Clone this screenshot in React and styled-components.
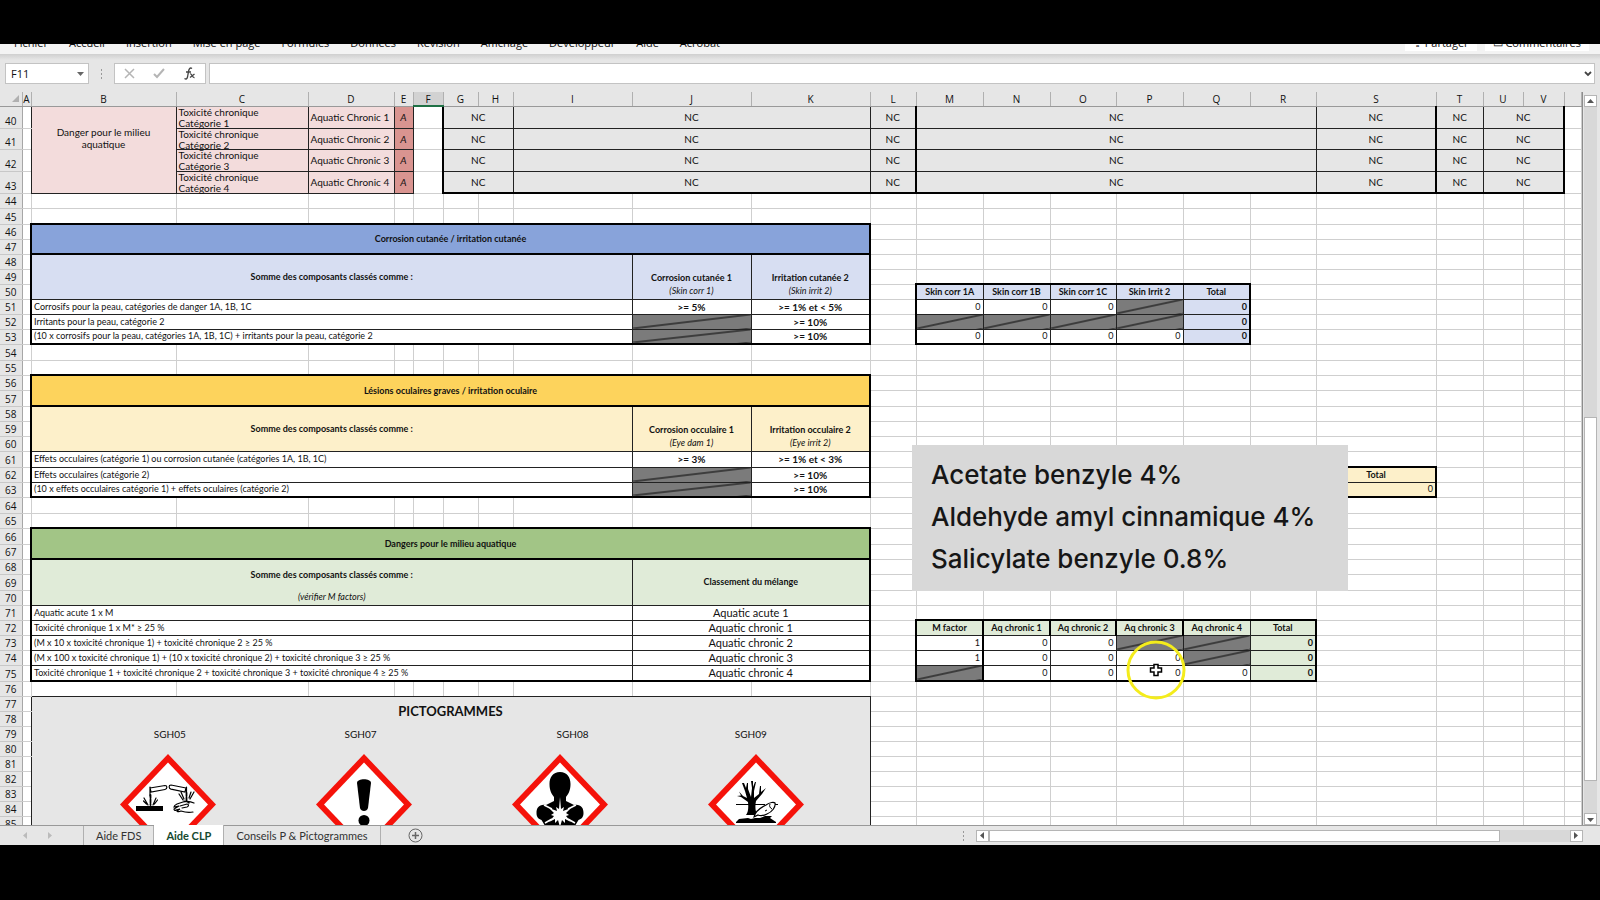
import { useState } from "react";
import styled, { createGlobalStyle, css } from "styled-components";

const GlobalStyle = createGlobalStyle`
  * {
    box-sizing: border-box;
  }
  body {
    margin: 0;
    background-color: #000;
    font-family: Lato, "Liberation Sans", sans-serif;
    font-size: 10px;
    color: #111;
  }
  button, input {
    font-family: inherit;
    color: inherit;
    border: none;
    padding: 0;
  }
`;

const Stage = styled.div`
  position: relative;
  display: flex;
  flex-direction: column;
  height: 100vh;
  padding: 44px 0 55px;
  overflow: hidden;
`;

const Ribbon = styled.nav`
  display: flex;
  align-items: flex-end;
  gap: 21px;
  height: 10px;
  flex-shrink: 0;
  padding: 0 11px 3px 14px;
  background-color: #f3f3f3;
  overflow: hidden;

  button {
    background: none;
    font-family: "Open Sans", sans-serif;
    font-size: 11px;
    line-height: 16px;
    white-space: nowrap;
  }
`;

const RibbonActions = styled.div`
  display: flex;
  gap: 8px;
  margin-left: auto;

  button {
    padding: 0 8px;
    background-color: #fff;
  }
`;

const FormulaBar = styled.div`
  display: flex;
  align-items: stretch;
  height: 38px;
  flex-shrink: 0;
  padding: 9px 5px 8px;
  background: linear-gradient(#cfcfcf, #e6e6e6 6px);
`;

const Field = styled.div`
  display: flex;
  align-items: center;
  border: 1px solid #c3c3c3;
  background-color: #fff;
`;

const NameBox = styled(Field)`
  width: 84px;
  padding-right: 4px;

  input {
    flex: 1;
    min-width: 0;
    padding-left: 5px;
    font-family: "Open Sans", sans-serif;
    font-size: 11px;
  }
`;

const Dots = styled.div`
  display: flex;
  flex-direction: column;
  align-items: center;
  justify-content: center;
  gap: 2px;
  width: 25px;

  i {
    width: 1px;
    height: 2px;
    background-color: #999;
  }
`;

const FormulaButtons = styled(Field)`
  justify-content: space-around;
  width: 92px;
  margin-right: 3px;

  button {
    display: flex;
    background: none;
  }
`;

const FormulaInput = styled(Field)`
  flex: 1;
  padding-right: 2px;

  input {
    flex: 1;
  }
  button {
    display: flex;
    background: none;
  }
`;

const Workspace = styled.div`
  display: flex;
  flex: 1;
  min-height: 0;
  background-color: #e6e6e6;
`;

const Sheet = styled.div`
  flex: 1;
  min-width: 0;
  overflow: hidden;
  border-right: 1px solid #8c8c8c;
`;

const Table = styled.table`
  width: 100%;
  table-layout: fixed;
  border-collapse: collapse;
  background-color: #fff;
`;

const ColHead = styled.th`
  height: 14px;
  padding: 0;
  font-family: "Open Sans", sans-serif;
  font-size: 10px;
  font-weight: 400;
  line-height: 12px;
  background-color: ${(p) => (p.$active ? "#d2d2d2" : "#e6e6e6")};
  border-right: 1px solid #b0b0b0;
  border-bottom: ${(p) => (p.$active ? "2px solid #1f7145" : "1px solid #999")};

  svg {
    display: block;
    margin-left: auto;
    margin-right: 3px;
  }
`;

const RowHead = styled.th`
  height: ${(p) => p.$h}px;
  padding: 0;
  vertical-align: bottom;
  font-family: "Open Sans", sans-serif;
  font-size: 10px;
  font-weight: 400;
  line-height: 13px;
  background-color: #e6e6e6;
  border-right: 1px solid #a6a6a6;
  border-bottom: 1px solid #c8c8c8;
`;

const fills = {
  pink: "#f3dcdc",
  rose: "#d99490",
  grey: "#e6e6e6",
  blue: "#88a3da",
  blueLight: "#d7def2",
  yellow: "#fdd35c",
  yellowLight: "#fdf0ca",
  green: "#a2c586",
  greenLight: "#e0ebd8",
};

const hatch = css`
  background: linear-gradient(
      to bottom right,
      transparent calc(50% - 1px),
      #000 50%,
      transparent calc(50% + 1px)
    )
    #7b7b7b;
`;

const borders = {
  grid: "1px solid #cfcfcf",
  thin: "1px solid #222",
  thick: "2px solid #000",
  none: "none",
};

const Cell = styled.td`
  padding: ${(p) => (p.$raised ? "0 20px 24px" : "0 2px")};
  background-color: ${(p) => fills[p.$fill] || "#fff"};
  text-align: ${(p) => p.$align || "center"};
  vertical-align: ${(p) => p.$valign || "middle"};
  font-size: ${(p) => p.$size || 10}px;
  font-weight: ${(p) => (p.$bold ? 700 : 400)};
  font-style: ${(p) => (p.$italic ? "italic" : "normal")};
  line-height: 12px;
  border: ${(p) => borders[p.$line || "grid"]};
  ${(p) => p.$hatch && hatch}
  ${(p) => p.$top && `border-top: ${borders[p.$top]};`}
  ${(p) => p.$right && `border-right: ${borders[p.$right]};`}
  ${(p) => p.$bottom && `border-bottom: ${borders[p.$bottom]};`}
  ${(p) => p.$left && `border-left: ${borders[p.$left]};`}
`;

const TwoLines = styled.div`
  height: 20px;
  line-height: 11px;
  text-align: left;
  white-space: pre;
`;

const HeadLines = styled.div`
  display: flex;
  flex-direction: column;
  gap: ${(p) => p.$gap || 1}px;
  padding-bottom: 2px;

  em {
    font-weight: 400;
  }
`;

const Pictograms = styled.div`
  display: flex;
  gap: 100px;
  height: 88px;
  padding: 13px 0 0 86px;
  overflow: hidden;

  svg {
    flex-shrink: 0;
  }
`;

const VerticalBar = styled.div`
  display: flex;
  flex-direction: column;
  width: 17px;
  padding: 3px 3px 0 1px;
`;

const ArrowButton = styled.button`
  display: flex;
  align-items: center;
  justify-content: center;
  width: 13px;
  height: 12px;
  flex-shrink: 0;
  background-color: #fff;
  border: 1px solid #b5b5b5;
`;

const VerticalTrack = styled.div`
  display: flex;
  flex: 1;
  background-color: #d8d8d8;
  padding: 310px 0 32px;

  div {
    flex: 1;
    background-color: #fff;
    border: 1px solid #b5b5b5;
  }
`;

const TabBar = styled.div`
  display: flex;
  align-items: stretch;
  height: 20px;
  flex-shrink: 0;
  background-color: #e6e6e6;
  border-top: 1px solid #999;
`;

const TabArrows = styled.div`
  display: flex;
  align-items: center;
  gap: 18px;
  width: 84px;
  padding-left: 22px;
  border-right: 1px solid #b0b0b0;
`;

const Tab = styled.button`
  padding: 0 12px;
  margin-top: ${(p) => (p.$active ? "-1px" : "0")};
  font-size: 11px;
  white-space: nowrap;
  color: ${(p) => (p.$active ? "#14492f" : "#333")};
  font-weight: ${(p) => (p.$active ? 700 : 400)};
  background-color: ${(p) => (p.$active ? "#fff" : "transparent")};
  border-right: 1px solid #b0b0b0;
`;

const AddTab = styled.button`
  display: flex;
  align-items: center;
  margin: 0 auto 0 27px;
  background: none;
`;

const HorizontalBar = styled.div`
  display: flex;
  align-items: center;
  width: 39%;
  padding-right: 17px;
`;

const HorizontalTrack = styled.div`
  flex: 1;
  height: 12px;
  padding-right: 70px;
  background-color: #d8d8d8;

  div {
    height: 12px;
    background-color: #fff;
    border: 1px solid #b5b5b5;
  }
`;

const Caption = styled.aside`
  position: absolute;
  top: 445px;
  right: 252px;
  width: 436px;
  padding: 9px 19px 11px;
  background-color: #d8d8d8;
  font-family: Inter, "Open Sans", sans-serif;
  font-size: 26px;
  font-weight: 500;
  line-height: 42px;
  white-space: nowrap;
  color: #161616;

  p {
    margin: 0;
  }
`;

const Pointer = styled.svg`
  position: absolute;
  top: 640px;
  right: 414px;
`;

const columns = [
  ["A", 9],
  ["B", 145],
  ["C", 132],
  ["D", 86],
  ["E", 19],
  ["F", 30],
  ["G", 35],
  ["H", 35],
  ["I", 119],
  ["J", 119],
  ["K", 119],
  ["L", 46],
  ["M", 67],
  ["N", 67],
  ["O", 66],
  ["P", 67],
  ["Q", 67],
  ["R", 66],
  ["S", 120],
  ["T", 47],
  ["U", 40],
  ["V", 41],
  ["", null],
];

const heights = {
  40: 22, 41: 21, 42: 22, 43: 22, 45: 16, 46: 15, 54: 16, 57: 16,
  61: 16, 64: 16, 66: 16, 69: 16, 75: 16,
};

// cell builders
const nc = (extra) => ({ text: "NC", fill: "grey", line: "thin", ...extra });
const title = (text, fill) => ({
  text, fill, span: 10, rows: 2, line: "thick", bold: true, size: 9,
});
const rule = (text, last) => ({
  text, span: 8, line: "thin", left: "thick", align: "left", size: 9,
  bottom: last ? "thick" : "thin",
});
const limit = (text, extra) => ({ text, line: "thin", bold: true, ...extra });
const crossed = (extra) => ({ hatch: true, line: "thin", ...extra });
const label = (text, fill, extra) => ({
  text, fill, line: "thin", top: "thick", bold: true, size: 9, ...extra,
});
const num = (text, extra) => ({
  text, line: "thin", align: "right", size: 9, ...extra,
});
const total = (fill, extra) => num("0", { fill, bold: true, right: "thick", ...extra });
const head = (name, code, fill, extra) => ({
  text: (
    <HeadLines>
      <span>{name}</span>
      <em>{code}</em>
    </HeadLines>
  ),
  fill, rows: 3, line: "thin", top: "thick", bold: true, size: 9, valign: "bottom", ...extra,
});

const cells = {
  46: { B: title("Corrosion cutanée / irritation cutanée", "blue") },
  48: {
    B: { text: "Somme des composants classés comme :", fill: "blueLight", span: 8, rows: 3, line: "thin", left: "thick", top: "thick", bold: true, size: 9 },
    J: head("Corrosion cutanée 1", "(Skin corr 1)", "blueLight"),
    K: head("Irritation cutanée 2", "(Skin irrit 2)", "blueLight", { right: "thick" }),
  },
  50: {
    M: label("Skin corr 1A", "blueLight", { left: "thick" }),
    N: label("Skin corr 1B", "blueLight"),
    O: label("Skin corr 1C", "blueLight"),
    P: label("Skin Irrit 2", "blueLight"),
    Q: label("Total", "blueLight", { right: "thick" }),
  },
  51: {
    B: rule("Corrosifs pour la peau, catégories de danger 1A, 1B, 1C"),
    J: limit(">= 5%"),
    K: limit(">= 1% et < 5%", { right: "thick" }),
    M: num("0", { left: "thick" }),
    N: num("0"),
    O: num("0"),
    P: crossed(),
    Q: total("blueLight"),
  },
  52: {
    B: rule("Irritants pour la peau, catégorie 2"),
    J: crossed(),
    K: limit(">= 10%", { right: "thick" }),
    M: crossed({ left: "thick" }),
    N: crossed(),
    O: crossed(),
    P: crossed(),
    Q: total("blueLight"),
  },
  53: {
    B: rule("(10 x corrosifs pour la peau, catégories 1A, 1B, 1C) + irritants pour la peau, catégorie 2", true),
    J: crossed({ bottom: "thick" }),
    K: limit(">= 10%", { right: "thick", bottom: "thick" }),
    M: num("0", { left: "thick", bottom: "thick" }),
    N: num("0", { bottom: "thick" }),
    O: num("0", { bottom: "thick" }),
    P: num("0", { bottom: "thick" }),
    Q: total("blueLight", { bottom: "thick" }),
  },
  56: { B: title("Lésions oculaires graves / irritation oculaire", "yellow") },
  58: {
    B: { text: "Somme des composants classés comme :", fill: "yellowLight", span: 8, rows: 3, line: "thin", left: "thick", top: "thick", bold: true, size: 9 },
    J: head("Corrosion occulaire 1", "(Eye dam 1)", "yellowLight"),
    K: head("Irritation occulaire 2", "(Eye irrit 2)", "yellowLight", { right: "thick" }),
  },
  61: {
    B: rule("Effets occulaires (catégorie 1) ou corrosion cutanée (catégories 1A, 1B, 1C)"),
    J: limit(">= 3%"),
    K: limit(">= 1% et < 3%", { right: "thick" }),
  },
  62: {
    B: rule("Effets occulaires (catégorie 2)"),
    J: crossed(),
    K: limit(">= 10%", { right: "thick" }),
    S: label("Total", "yellowLight", { right: "thick", left: "thick" }),
  },
  63: {
    B: rule("(10 x effets occulaires catégorie 1) + effets oculaires (catégorie 2)", true),
    J: crossed({ bottom: "thick" }),
    K: limit(">= 10%", { right: "thick", bottom: "thick" }),
    S: num("0", { fill: "yellowLight", right: "thick", bottom: "thick", left: "thick" }),
  },
  66: { B: title("Dangers pour le milieu aquatique", "green") },
  68: {
    B: {
      text: (
        <HeadLines $gap={10}>
          <span>Somme des composants classés comme :</span>
          <em>(vérifier M factors)</em>
        </HeadLines>
      ),
      fill: "greenLight", span: 8, rows: 3, line: "thin", left: "thick", top: "thick", bold: true, size: 9, valign: "bottom",
    },
    J: { text: "Classement du mélange", fill: "greenLight", span: 2, rows: 3, line: "thin", top: "thick", right: "thick", bold: true, size: 9 },
  },
  72: {
    M: label("M factor", "greenLight", { left: "thick", right: "thick" }),
    N: label("Aq chronic 1", "greenLight", { right: "thick" }),
    O: label("Aq chronic 2", "greenLight", { right: "thick" }),
    P: label("Aq chronic 3", "greenLight", { right: "thick" }),
    Q: label("Aq chronic 4", "greenLight"),
    R: label("Total", "greenLight", { right: "thick" }),
  },
  73: {
    M: num("1", { left: "thick", right: "thick" }),
    N: num("0"),
    O: num("0"),
    P: crossed(),
    Q: crossed(),
    R: total("greenLight"),
  },
  74: {
    M: num("1", { left: "thick", right: "thick" }),
    N: num("0"),
    O: num("0"),
    P: num("0"),
    Q: crossed(),
    R: total("greenLight"),
  },
  75: {
    M: crossed({ left: "thick", right: "thick", bottom: "thick" }),
    N: num("0", { bottom: "thick" }),
    O: num("0", { bottom: "thick" }),
    P: num("0", { bottom: "thick" }),
    Q: num("0", { bottom: "thick" }),
    R: total("greenLight", { bottom: "thick" }),
  },
  77: {
    B: { text: "PICTOGRAMMES", fill: "grey", span: 10, rows: 2, line: "none", top: "thin", left: "thin", right: "thin", bold: true, size: 13 },
  },
  79: {
    B: { text: "SGH05", fill: "grey", span: 2, line: "none", left: "thin" },
    D: { text: "SGH07", fill: "grey", span: 2, line: "none" },
    F: { fill: "grey", span: 3, line: "none" },
    I: { text: "SGH08", fill: "grey", line: "none" },
    J: { text: "SGH09", fill: "grey", span: 2, line: "none", right: "thin" },
  },
};

[1, 2, 3, 4].forEach((n) => {
  const row = 39 + n;
  const bottom = n === 4 ? "thick" : "thin";
  cells[row] = {
    C: { text: <TwoLines>{`Toxicité chronique\nCatégorie ${n}`}</TwoLines>, fill: "pink", line: "thin" },
    D: { text: `Aquatic Chronic ${n}`, fill: "pink", line: "thin", align: "left" },
    E: { text: "A", fill: "rose", line: "thin", italic: true },
    G: nc({ span: 2, left: "thick", bottom }),
    I: nc({ span: 3, bottom }),
    L: nc({ bottom, right: "thick" }),
    M: nc({ span: 6, bottom }),
    S: nc({ bottom, right: "thick" }),
    T: nc({ bottom }),
    U: nc({ span: 2, bottom, right: "thick" }),
  };
});
cells[40].B = { text: "Danger pour le milieu aquatique", fill: "pink", rows: 4, line: "thin", raised: true };

[
  ["Aquatic acute 1 x M", "Aquatic acute 1"],
  ["Toxicité chronique 1 x M* ≥ 25 %", "Aquatic chronic 1"],
  ["(M x 10 x toxicité chronique 1) + toxicité chronique 2 ≥ 25 %", "Aquatic chronic 2"],
  ["(M x 100 x toxicité chronique 1) + (10 x toxicité chronique 2) + toxicité chronique 3 ≥ 25 %", "Aquatic chronic 3"],
  ["Toxicité chronique 1 + toxicité chronique 2 + toxicité chronique 3 + toxicité chronique 4 ≥ 25 %", "Aquatic chronic 4"],
].forEach(([formula, result], i) => {
  const last = i === 4;
  cells[71 + i] = {
    ...cells[71 + i],
    B: rule(formula, last),
    J: { text: result, span: 2, line: "thin", size: 11, right: "thick", bottom: last ? "thick" : "thin" },
  };
});

function Diamond({ children }) {
  return (
    <svg width="96" height="101" viewBox="0 0 96 101">
      <path d="M48 0 96 50.500 48 101 0 50.500Z" fill="#f5120a" />
      <path d="M48 8.500 88 50.500 48 92.500 8 50.500Z" fill="#fff" />
      {children}
    </svg>
  );
}

function Corrosive() {
  return (
    <Diamond>
      <rect x="16" y="52" width="27" height="5" fill="#000" />
      <g fill="none" stroke="#000" strokeWidth="1.2" strokeLinecap="round">
        <path d="M30 34 45 31.500c2.500 0 2.500 3.500 0 4L31 38zM30 33v9M66 34 51 31c-2.500 0-2.500 3.500 0 4.200L65 38zM66.500 33v6" />
        <path d="M30.500 41v10M66.500 39v9" strokeWidth="1.800" strokeDasharray="3 1.500" />
        <path d="M24 44l4 7M26.500 50l-3-3M36 44l-3 7M34.500 50l3-4M59 40l4 6M61 38l3 7M74 38l-4 7M71 38l-2 6" />
        <path d="M74 49c-4-2-8-2-11-1l-6 2c-2 1-3 2-3 3l5-1-5 3c0 1 1 2 2 1l4-1-3 2c1 1 2 1 4 0 3 1 7 2 12 1M60 52l7-2c2 0 2 2 0 3l-5 1M64 47c2 0 4 1 5 2" />
      </g>
    </Diamond>
  );
}

function Exclamation() {
  return (
    <Diamond>
      <path d="M41 29c0-5 14-5 14 0l-3 25c-1 4-7 4-8 0z" fill="#000" />
      <circle cx="48" cy="66.500" r="5.500" fill="#000" />
    </Diamond>
  );
}

function HealthHazard() {
  return (
    <Diamond>
      <path
        d="M48 18c7 0 10.500 5 10.500 12 0 6-2 10-4.500 13v4l8 4c7-1 9.500 3 9.500 8 0 4-2 6-5 7l-3 5v6h-31v-6l-3-5c-3-1-5-3-5-7 0-5 2.500-9 9.500-8l8-4v-4c-2.500-3-4.500-7-4.500-13 0-7 3.500-12 10.500-12z"
        fill="#000"
      />
      <path
        d="M48 43l1 12 3-2-1 4 8-3-5 5 3 2-3 1 5 6-6-3 0 4-3-3-2 7-2-7-3 3 0-4-6 3 5-6-3-1 3-2-5-5 8 3-1-4 3 2z"
        fill="#fff"
      />
      <path d="M32 51l8 4M64 51l-8 4M33 69l7-4M63 69l-7-4" stroke="#fff" strokeWidth="1.500" />
    </Diamond>
  );
}

function Environment() {
  return (
    <Diamond>
      <path
        d="M38 61c2.500-3 2.500-8 2-13l-7-5-4-1 4-.5-2-4 4 4.500 4 2-2-7-3-8 2 0 2 5 1-5 1 0 0 6 3 8 1-9-1-7 2 0 0 6 2-5 1 0-2 9 0 7 5-4 1-8 1 0 0 6 5-4-4 6-6 7c-1 5-1 11 2 14z"
        fill="#000"
      />
      <path d="M28 50.500h29M67 50.500h3" stroke="#000" strokeWidth="1" />
      <path
        d="M46 63c1-5 6-9 12-12 4-3 8-3 9-2 1 4-3 9-8 11-4 2-7 2-9 1z"
        fill="#fff"
        stroke="#000"
        strokeWidth="1.200"
      />
      <path d="M62 50c-1 2 0 4 2 5M57 57l2-1" stroke="#000" strokeWidth="1" fill="none" />
      <path d="M28 68l3-3 9-1 3 1 4-1 5 0 5-2 7 0-2 2 6 4v1H28z" fill="#000" />
    </Diamond>
  );
}

cells[80] = {
  B: {
    text: (
      <Pictograms>
        <Corrosive />
        <Exclamation />
        <HealthHazard />
        <Environment />
      </Pictograms>
    ),
    fill: "grey", span: 10, rows: 6, line: "none", left: "thin", right: "thin", bottom: "thin", valign: "top",
  },
};

const rowNumbers = Array.from({ length: 46 }, (_, i) => 40 + i);

// coordinates covered by a merged cell, so that no blank cell is added there
const covered = new Set();
rowNumbers.forEach((row) => {
  Object.entries(cells[row] || {}).forEach(([col, cell]) => {
    const start = columns.findIndex(([name]) => name === col);
    for (let r = row; r < row + (cell.rows || 1); r++) {
      for (let c = start; c < start + (cell.span || 1); c++) {
        if (r !== row || c !== start) covered.add(`${r}:${c}`);
      }
    }
  });
});

function SheetRow({ row }) {
  const boxed = row < 44 || row > 76;
  return (
    <tr>
      <RowHead scope="row" $h={heights[row] || 15}>
        {row}
      </RowHead>
      {columns.map(([name], c) => {
        if (covered.has(`${row}:${c}`)) return null;
        const cell = (cells[row] && cells[row][name]) || {};
        const darkRight = name === "A" && boxed ? "thin" : cell.right;
        const underBoxes = row === 76 && c > 0 && c < 11;
        return (
          <Cell
            key={c}
            colSpan={cell.span}
            rowSpan={cell.rows}
            $fill={cell.fill}
            $line={cell.line}
            $top={cell.top}
            $right={darkRight}
            $bottom={underBoxes ? "thin" : cell.bottom}
            $left={cell.left}
            $align={cell.align}
            $valign={cell.valign}
            $size={cell.size}
            $bold={cell.bold}
            $italic={cell.italic}
            $hatch={cell.hatch}
            $raised={cell.raised}
          >
            {cell.text}
          </Cell>
        );
      })}
    </tr>
  );
}

function Triangle({ points, color = "#555" }) {
  return (
    <svg width="7" height="7" viewBox="0 0 7 7">
      <polygon points={points} fill={color} />
    </svg>
  );
}

const menus = [
  "Fichier", "Accueil", "Insertion", "Mise en page", "Formules", "Données",
  "Révision", "Affichage", "Développeur", "Aide", "Acrobat",
];
const sheets = ["Aide FDS", "Aide CLP", "Conseils P & Pictogrammes"];

function App() {
  const [active, setActive] = useState("Aide CLP");
  const [formula, setFormula] = useState("");

  return (
    <Stage>
      <GlobalStyle />
      <Ribbon>
        {menus.map((menu) => (
          <button key={menu}>{menu}</button>
        ))}
        <RibbonActions>
          <button>⇪ Partager</button>
          <button>▭ Commentaires</button>
        </RibbonActions>
      </Ribbon>
      <FormulaBar>
        <NameBox>
          <input aria-label="Zone Nom" defaultValue="F11" />
          <Triangle points="0,2 7,2 3.5,6" color="#666" />
        </NameBox>
        <Dots>
          <i />
          <i />
          <i />
        </Dots>
        <FormulaButtons>
          <button aria-label="Annuler">
            <svg width="11" height="11" viewBox="0 0 11 11" stroke="#b5b5b5" strokeWidth="1.500">
              <path d="M1 1l9 9M10 1l-9 9" />
            </svg>
          </button>
          <button aria-label="Entrer">
            <svg width="12" height="11" viewBox="0 0 12 11" fill="none" stroke="#b5b5b5" strokeWidth="2">
              <path d="M1 6l3 3 7-8" />
            </svg>
          </button>
          <button aria-label="Insérer une fonction">
            <svg width="12" height="13" viewBox="0 0 12 13" fill="none" stroke="#444" strokeWidth="1.300">
              <path d="M8 1.500C6 0 5 2 4.500 4.500L3.500 10c-.5 2-1.500 2.500-3 1.500M2 5h5M6 7c2-1 2 4 4.500 3.500M10.500 7 6 10.500" />
            </svg>
          </button>
        </FormulaButtons>
        <FormulaInput>
          <input
            aria-label="Barre de formule"
            value={formula}
            onChange={(e) => setFormula(e.target.value)}
          />
          <button aria-label="Développer la barre de formule">
            <svg width="8" height="8" viewBox="0 0 8 8" fill="none" stroke="#444" strokeWidth="1.800">
              <path d="M1 2l3 3 3-3" />
            </svg>
          </button>
        </FormulaInput>
      </FormulaBar>
      <Workspace>
        <Sheet>
          <Table>
            <colgroup>
              <col width="22" />
              {columns.map(([name, width]) => (
                <col key={name} width={width || undefined} />
              ))}
            </colgroup>
            <thead>
              <tr>
                <ColHead>
                  <Triangle points="7,0 7,7 0,7" color="#b0b0b0" />
                </ColHead>
                {columns.map(([name]) => (
                  <ColHead key={name} scope="col" $active={name === "F"}>
                    {name}
                  </ColHead>
                ))}
              </tr>
            </thead>
            <tbody>
              {rowNumbers.map((row) => (
                <SheetRow key={row} row={row} />
              ))}
            </tbody>
          </Table>
        </Sheet>
        <VerticalBar>
          <ArrowButton aria-label="Défiler vers le haut">
            <Triangle points="0,5 7,5 3.5,1" />
          </ArrowButton>
          <VerticalTrack>
            <div />
          </VerticalTrack>
          <ArrowButton aria-label="Défiler vers le bas">
            <Triangle points="0,2 7,2 3.5,6" />
          </ArrowButton>
        </VerticalBar>
      </Workspace>
      <TabBar>
        <TabArrows>
          <Triangle points="5,0 5,7 1,3.5" color="#bbb" />
          <Triangle points="1,0 1,7 5,3.5" color="#bbb" />
        </TabArrows>
        {sheets.map((sheet) => (
          <Tab key={sheet} $active={sheet === active} onClick={() => setActive(sheet)}>
            {sheet}
          </Tab>
        ))}
        <AddTab aria-label="Nouvelle feuille">
          <svg width="15" height="15" viewBox="0 0 15 15" fill="none" stroke="#666">
            <circle cx="7.5" cy="7.5" r="6.5" />
            <path d="M7.500 4v7M4 7.500h7" strokeWidth="1.500" />
          </svg>
        </AddTab>
        <Dots>
          <i />
          <i />
          <i />
        </Dots>
        <HorizontalBar>
          <ArrowButton aria-label="Défiler vers la gauche">
            <Triangle points="5,0 5,7 1,3.5" />
          </ArrowButton>
          <HorizontalTrack>
            <div />
          </HorizontalTrack>
          <ArrowButton aria-label="Défiler vers la droite">
            <Triangle points="1,0 1,7 5,3.5" />
          </ArrowButton>
        </HorizontalBar>
      </TabBar>
      <Caption>
        <p>Acetate benzyle 4%</p>
        <p>Aldehyde amyl cinnamique 4%</p>
        <p>Salicylate benzyle 0.8%</p>
      </Caption>
      <Pointer width="60" height="60" viewBox="0 0 60 60">
        <circle cx="30" cy="30" r="28" fill="none" stroke="#f4ec1c" strokeWidth="3" />
        <path
          d="M28 24.500h4v3.500h3.500v4H32v3.500h-4V32h-3.500v-4H28z"
          fill="#fff"
          stroke="#000"
          strokeWidth="1.500"
        />
      </Pointer>
    </Stage>
  );
}

export default App;
